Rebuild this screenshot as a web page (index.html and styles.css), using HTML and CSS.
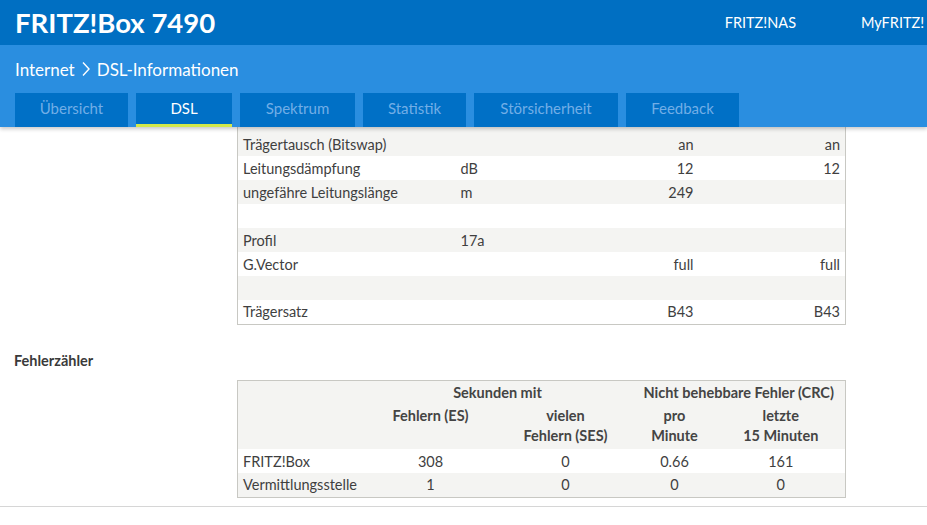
FILE: index.html
```html
<!DOCTYPE html>
<html lang="de">
<head>
<meta charset="utf-8">
<title>FRITZ!Box 7490 - DSL-Informationen</title>
<link rel="stylesheet" href="styles.css">
</head>
<body>
<header class="head">
  <div class="topbar">
    <div class="brand">FRITZ!Box 7490</div>
    <nav class="toplinks">
      <a class="toplink nas">FRITZ!NAS</a>
      <a class="toplink my">MyFRITZ!</a>
    </nav>
  </div>
  <div class="subbar">
    <div class="crumb">Internet<svg class="sep" width="20" height="16" viewBox="0 0 20 16"><path d="M7 1.5 L13 8 L7 14.5" fill="none" stroke="#ffffff" stroke-width="1.4"/></svg>DSL-Informationen</div>
    <nav class="tabs">
      <a class="tab t1">Übersicht</a>
      <a class="tab t2 active">DSL</a>
      <a class="tab t3">Spektrum</a>
      <a class="tab t4">Statistik</a>
      <a class="tab t5">Störsicherheit</a>
      <a class="tab t6">Feedback</a>
    </nav>
  </div>
</header>
<main class="content">
  <table class="info">
    <colgroup><col class="c1"><col class="c2"><col class="c3"><col class="c4"></colgroup>
    <tbody>
      <tr class="odd first"><td>Trägertausch (Bitswap)</td><td></td><td class="r">an</td><td class="r">an</td></tr>
      <tr><td>Leitungsdämpfung</td><td>dB</td><td class="r">12</td><td class="r">12</td></tr>
      <tr class="odd"><td>ungefähre Leitungslänge</td><td>m</td><td class="r">249</td><td class="r"></td></tr>
      <tr><td></td><td></td><td></td><td></td></tr>
      <tr class="odd"><td>Profil</td><td>17a</td><td></td><td></td></tr>
      <tr><td>G.Vector</td><td></td><td class="r">full</td><td class="r">full</td></tr>
      <tr class="odd"><td></td><td></td><td></td><td></td></tr>
      <tr><td>Trägersatz</td><td></td><td class="r">B43</td><td class="r">B43</td></tr>
    </tbody>
  </table>

  <h2 class="section">Fehlerzähler</h2>

  <table class="errors">
    <colgroup><col class="e1"><col class="e2"><col class="e3"><col class="e4"><col class="e5"></colgroup>
    <thead>
      <tr class="h1"><th></th><th colspan="2">Sekunden mit</th><th colspan="2">Nicht behebbare Fehler (CRC)</th></tr>
      <tr class="h2"><th></th><th>Fehlern (ES)</th><th>vielen<br>Fehlern (SES)</th><th>pro<br>Minute</th><th>letzte<br>15 Minuten</th></tr>
    </thead>
    <tbody>
      <tr><td class="l">FRITZ!Box</td><td>308</td><td>0</td><td>0.66</td><td>161</td></tr>
      <tr class="odd"><td class="l">Vermittlungsstelle</td><td>1</td><td>0</td><td>0</td><td>0</td></tr>
    </tbody>
  </table>
  <div class="rule"></div>
</main>
</body>
</html>
```
FILE: styles.css
```css
* { box-sizing: border-box; }
html, body { margin: 0; padding: 0; }
body {
  font-family: Lato, "Open Sans", "Liberation Sans", sans-serif;
  color: #3f3f3f;
  background: #ffffff;
  font-size: 14px;
}
.head {
  position: relative;
  z-index: 2;
  box-shadow: 0 2px 4px rgba(0, 0, 0, 0.22);
}
.topbar {
  height: 45px;
  background: #006fc2;
  display: flex;
  align-items: center;
  padding-left: 15px;
  color: #fff;
}
.brand {
  font-size: 27.5px;
  font-weight: 700;
  flex: 1;
  padding-bottom: 1px;
}
.toplinks { display: flex; }
.toplink { color: #fff; font-size: 14.5px; }
.nas { margin-right: 65px; }
.my { width: 66px; white-space: nowrap; overflow: hidden; }
.subbar {
  height: 82px;
  background: #2a8ee0;
  padding: 0 0 0 15px;
  display: flex;
  flex-direction: column;
}
.crumb {
  color: #fff;
  font-size: 17px;
  display: flex;
  align-items: center;
  align-self: flex-start;
  height: 22px;
  margin-top: 13px;
  margin-bottom: 13px;
}
.sep { display: block; margin: 0 1px 0 1px; }
.tabs { display: flex; gap: 8px; }
.tab {
  height: 34px;
  background: #0070c6;
  color: #72aee6;
  font-size: 15px;
  display: flex;
  align-items: center;
  justify-content: center;
  padding-bottom: 5px;
}
.tab.active { color: #fff; border-bottom: 3px solid #d4e94a; padding-bottom: 2px; }
.t1 { width: 113px; }
.t2 { width: 96px; }
.t3 { width: 115px; }
.t4 { width: 103px; }
.t5 { width: 144px; }
.t6 { width: 113px; }

.content { padding: 0; }
table { border-collapse: collapse; table-layout: fixed; }
.info {
  margin-left: 237px;
  width: 608px;
  border: 1px solid #c8c8c3;
  border-top: none;
  margin-top: -2px;
}
.c1 { width: 218px; }
.c2 { width: 100px; }
.c3 { width: 143px; }
.c4 { width: 147px; }
.info td {
  height: 24px;
  padding: 0 5px;
  font-size: 14.5px;
  white-space: nowrap;
}
.info tr.first td { height: 31px; padding-top: 7px; }
tr.odd td, .errors thead { background: #f4f4f2; }
.r { text-align: right; }

.section {
  font-size: 14.5px;
  font-weight: 700;
  margin: 27px 0 0 14px;
  height: 28px;
  color: #3a3a3a;
}
.errors {
  margin-left: 237px;
  width: 608px;
  border: 1px solid #c8c8c3;
}
.e1 { width: 125px; }
.e2 { width: 136px; }
.e3 { width: 134px; }
.e4 { width: 84px; }
.e5 { width: 129px; }
.errors th {
  font-weight: 700;
  font-size: 14.5px;
  color: #444;
  text-align: center;
  line-height: 20px;
  padding: 0;
}
.errors .h1 th { height: 25px; padding-top: 1px; }
.errors .h2 th { height: 44px; vertical-align: top; padding-top: 1px; }
.errors td {
  height: 24px;
  font-size: 14.5px;
  text-align: center;
  padding: 0;
}
.errors td.l { text-align: left; padding-left: 5px; }
.rule {
  margin-top: 8px;
  border-top: 1px solid #d6d6d6;
}
```
